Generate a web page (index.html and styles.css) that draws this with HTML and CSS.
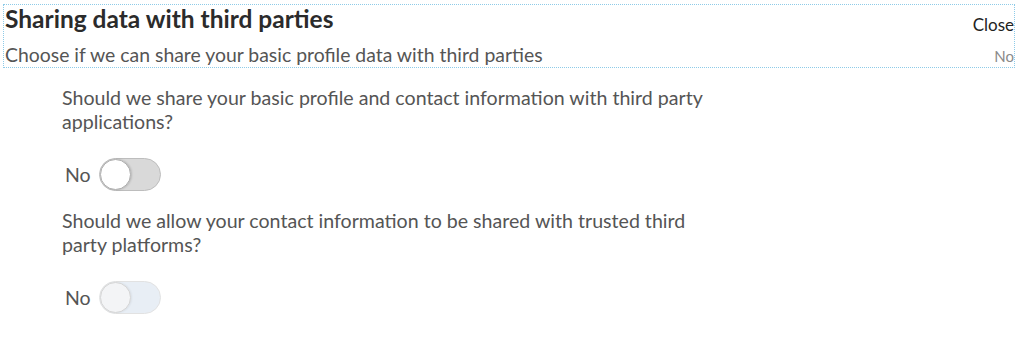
FILE: index.html
```html
<!DOCTYPE html>
<html lang="en">
<head>
<meta charset="utf-8">
<link rel="stylesheet" href="styles.css">
</head>
<body>
<div class="header">
  <div class="header-row">
    <h1 class="title">Sharing data with third parties</h1>
    <span class="close">Close</span>
  </div>
  <div class="header-row sub">
    <p class="subtitle">Choose if we can share your basic profile data with third parties</p>
    <span class="state">No</span>
  </div>
</div>
<div class="settings">
  <div class="setting">
    <p class="question">Should we share your basic profile and contact information with third party applications?</p>
    <div class="toggle-row">
      <span class="toggle-label">No</span>
      <span class="toggle"><span class="knob"></span></span>
    </div>
  </div>
  <div class="setting">
    <p class="question">Should we allow your contact information to be shared with trusted third party platforms?</p>
    <div class="toggle-row">
      <span class="toggle-label">No</span>
      <span class="toggle disabled"><span class="knob"></span></span>
    </div>
  </div>
</div>
</body>
</html>
```

FILE: styles.css
```css
body {
  margin: 0;
  background: #ffffff;
  font-family: "Lato", "Noto Sans", sans-serif;
  color: #555555;
}
.header {
  margin: 4px 9px 0 3px;
  border: 1px dotted #8ecbe8;
  padding: 0 0 0 1px;
}
.header-row {
  display: flex;
  justify-content: space-between;
  align-items: flex-end;
}
.header-row.sub {
  align-items: baseline;
  padding-top: 11px;
}
.title {
  margin: 0;
  font-size: 24.5px;
  font-weight: 700;
  color: #2b2b2b;
  line-height: 27px;
}
.close {
  font-size: 17px;
  color: #222222;
  line-height: 20px;
  margin-bottom: -3px;
}
.subtitle {
  margin: 0;
  font-size: 19.4px;
  line-height: 24px;
  color: #555555;
}
.state {
  font-size: 15px;
  color: #8a8a8a;
  line-height: 20px;
}
.settings {
  padding: 0 0 0 62px;
  width: 655px;
}
.setting {
  padding-top: 18px;
}
.question {
  margin: 0;
  font-size: 19.6px;
  line-height: 24px;
  color: #555555;
}
.toggle-row {
  display: flex;
  align-items: center;
  gap: 8px;
  margin-top: 24px;
  padding-left: 3px;
}
.toggle-label {
  font-size: 19.5px;
  color: #555555;
}
.toggle {
  display: flex;
  align-items: center;
  width: 60px;
  height: 31px;
  border: 1px solid #bdbdbd;
  border-radius: 17px;
  background: #d9d9d9;
}
.knob {
  width: 29px;
  height: 29px;
  border-radius: 50%;
  background: #ffffff;
  border: 1px solid #b0b0b0;
  box-shadow: 1px 0 2px rgba(0,0,0,0.15);
}
.toggle.disabled {
  background: #e8eef5;
  border-color: #e2e2e2;
}
.toggle.disabled .knob {
  background: #f3f4f6;
  border-color: #d6d6d6;
  box-shadow: 1px 0 2px rgba(0,0,0,0.06);
}
```
